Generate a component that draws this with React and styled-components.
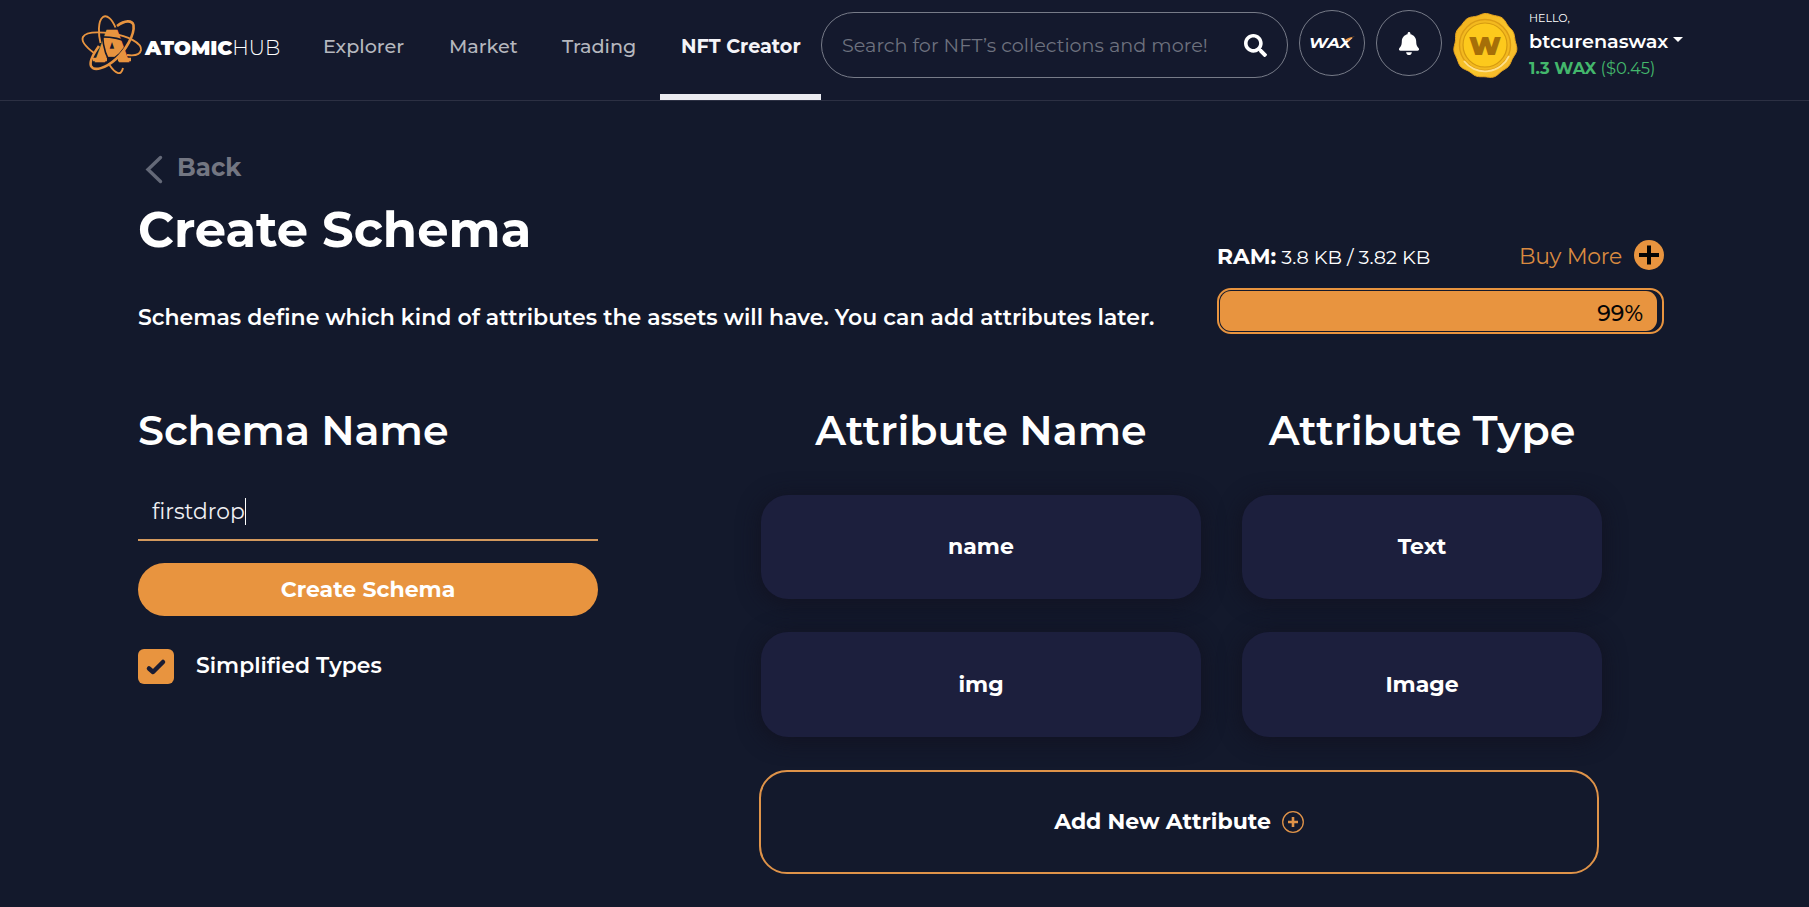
import React from "react";
import styled, { createGlobalStyle } from "styled-components";
import { FaSearch, FaBell } from "react-icons/fa";

const orange = "#e8943f";

const Global = createGlobalStyle`
  * { box-sizing: border-box; }
  body {
    margin: 0;
    min-height: 907px;
    background: #13192c;
    color: #fff;
    font-family: Montserrat, Inter, "Liberation Sans", sans-serif;
    overflow: hidden;
  }
`;

const Header = styled.header`
  display: flex;
  align-items: flex-start;
  height: 101px;
  padding-left: 82px;
  background: #14192d;
  border-bottom: 1px solid #2c3043;
`;

const Brand = styled.a`
  display: flex;
  width: 220px;
  padding-top: 15px;
`;

const Mark = styled.svg`
  flex: none;
  width: 60px;
  height: 60px;
  overflow: visible;
`;

const Wordmark = styled.div`
  display: flex;
  height: 65px;
  margin-left: 3px;
  align-items: center;
  font-size: 20.3px;
  font-weight: 300;

  strong {
    font-weight: 900;
  }
`;

const Nav = styled.nav`
  display: flex;
`;

const NavItem = styled.a`
  display: flex;
  align-items: center;
  height: 100px;
  width: ${(p) => p.$width}px;
  padding: 0 0 8px 21px;
  font-size: 19.2px;
  font-weight: ${(p) => (p.$active ? 700 : 500)};
  white-space: nowrap;
  color: ${(p) => (p.$active ? "#f4f4f8" : "#b5b7be")};
  box-shadow: ${(p) => (p.$active ? "inset 0 -6px #ebebf1" : "none")};
`;

const Search = styled.div`
  display: flex;
  align-items: center;
  justify-content: space-between;
  width: 467px;
  height: 66px;
  margin-top: 12px;
  padding: 0 20px;
  border: 1px solid #777b88;
  border-radius: 33px;
  font-size: 19.2px;
  font-weight: 400;
  color: #6d717e;
  white-space: nowrap;

  svg { width: 23px; height: 23px; color: #fff; }
`;

const RoundButton = styled.div`
  display: flex;
  align-items: center;
  justify-content: center;
  width: 66px;
  height: 66px;
  margin: 10px 0 0 11px;
  border: 1px solid #777b88;
  border-radius: 50%;
`;

const WaxLogo = styled.svg`
  width: 46px;
  height: 16px;
  overflow: visible;
`;

const BellIcon = styled(FaBell)`
  width: 24px;
  height: 23px;
`;

const Seal = styled.svg`
  width: 66px;
  height: 66px;
  margin: 12px 0 0 10px;
`;

const User = styled.div`
  display: flex;
  flex-direction: column;
  margin: 9px 0 0 11px;
`;

const Hello = styled.div`
  height: 18px;
  line-height: 18px;
  font-size: 11.1px;
`;

const UserName = styled.div`
  display: flex;
  align-items: center;
  height: 28px;
  font-size: 19.2px;
  font-weight: 600;
`;

const Caret = styled.i`
  margin: -3px 0 0 5px;
  border: 5.5px solid transparent;
  border-top-color: #fff;
  border-bottom: 0;
`;

const Balance = styled.div`
  height: 26px;
  line-height: 26px;
  font-size: 16.4px;
  color: #43b76c;

  strong { font-weight: 700; }
`;

const Main = styled.main`
  padding: 46px 145px 0 138px;
`;

const Back = styled.a`
  display: flex;
  align-items: center;
  gap: 14px;
  height: 40px;
  padding-left: 7px;
  font-size: 24.5px;
  font-weight: 700;
  color: #737682;

  svg { width: 18px; height: 29px; margin-top: 5px; }
`;

const Intro = styled.section`
  display: flex;
  justify-content: space-between;
`;

const Title = styled.h1`
  margin: 12px 0 44px;
  height: 60px;
  line-height: 60px;
  font-size: 49.6px;
  font-weight: 700;
`;

const Lead = styled.p`
  margin: 0;
  height: 30px;
  line-height: 30px;
  font-size: 22px;
  font-weight: 600;
  white-space: nowrap;
`;

const Ram = styled.aside`
  width: 447px;
  padding-top: 47px;
`;

const RamRow = styled.div`
  display: flex;
  align-items: center;
  height: 44px;
`;

const RamText = styled.div`
  flex: 1;
  font-size: 19.3px;

  strong { font-size: 21.8px; font-weight: 700; }
`;

const BuyMore = styled.a`
  display: flex;
  align-items: center;
  gap: 12px;
  font-size: 21.9px;
  font-weight: 400;
  letter-spacing: -0.25px;
  color: #d98a40;

  svg { width: 30px; height: 30px; margin-top: -2px; }
`;

const Meter = styled.div`
  height: 46px;
  margin-top: 10px;
  padding: 1px 5px 1px 1px;
  border: 2px solid ${orange};
  border-radius: 14px;
`;

const MeterFill = styled.div`
  display: flex;
  align-items: center;
  justify-content: flex-end;
  height: 100%;
  padding: 5px 14px 0 0;
  border-radius: 11px;
  background: ${orange};
  color: #050505;
  font-size: 22px;
  font-weight: 500;
`;

const Columns = styled.section`
  display: flex;
  margin-top: 67px;
`;

const Heading = styled.h2`
  margin: 0;
  height: 61px;
  line-height: 58px;
  font-size: 41.2px;
  font-weight: 600;
  text-align: ${(p) => (p.$center ? "center" : "left")};
  white-space: nowrap;
`;

const Form = styled.div`
  width: 460px;
  margin-right: 163px;
`;

const Field = styled.div`
  display: flex;
  align-items: center;
  height: 58px;
  margin-top: 21px;
  padding-left: 14px;
  border-bottom: 2px solid #d3995d;
  font-size: 21.8px;
  color: #f0f0f4;

  &::after {
    content: "";
    width: 1px;
    height: 27px;
    background: #fff;
  }
`;

const Submit = styled.button`
  display: block;
  width: 100%;
  height: 53px;
  margin: 22px 0 33px;
  padding: 0;
  border: 0;
  border-radius: 27px;
  background: ${orange};
  color: #fff;
  font: 700 22px Montserrat, Inter, sans-serif;
`;

const CheckRow = styled.label`
  display: flex;
  align-items: center;
  height: 35px;
  gap: 22px;
  font-size: 21.9px;
  font-weight: 600;
  line-height: 32px;
`;

const CheckLabel = styled.span`
  margin-top: -3px;
`;

const Checkbox = styled.span`
  display: flex;
  align-items: center;
  justify-content: center;
  width: 36px;
  height: 35px;
  border-radius: 6px;
  background: ${orange};

  svg { width: 20px; height: 18px; overflow: visible; }
`;

const Attributes = styled.div`
  width: 841px;
`;

const Grid = styled.div`
  display: grid;
  grid-template-columns: 440px 360px;
  grid-template-rows: 61px 104px 105px;
  column-gap: 41px;
  row-gap: 33px;
`;

const Card = styled.div`
  display: flex;
  align-items: center;
  justify-content: center;
  padding-bottom: 1px;
  border-radius: 27px;
  background: #1c1f3d;
  box-shadow: 0 3px 20px 3px rgba(17, 18, 32, 0.75);
  font-size: 22px;
  font-weight: 700;
`;

const AddButton = styled.div`
  display: flex;
  align-items: center;
  justify-content: center;
  gap: 11px;
  width: 840px;
  height: 104px;
  margin: 33px 0 0 -2px;
  padding-bottom: 1px;
  border: 2px solid #df9349;
  border-radius: 28px;
  font-size: 22px;
  font-weight: 700;

  svg { width: 22px; height: 22px; }
`;

function AtomLogo() {
  return (
    <Mark viewBox="0 0 60 60" fill="none" stroke={orange} strokeWidth="1.9">
      <text x="29.8" y="45.500" textAnchor="middle" fontFamily="DejaVu Sans" fontWeight="700" fontSize="41" fill={orange} strokeWidth="2.4">A</text>
      <path d="M11 44.500 H25 M36 44.500 H49" strokeWidth="3.500" />
      <g stroke="#14192d" strokeWidth="1.6">
        <path d="M49 18 C46 29 40 38 32 43.500" />
        <path d="M16 22 C28 21.500 38 23 47 28" />
        <path d="M20.500 20 C21 32 25 44 31 52" />
      </g>
      <path d="M33.500 12.500 C30 4 25 -0.500 21 2 C15.500 6 16.500 20 18.500 28 M27.500 50 C33 58 39 62 41 53" />
      <path strokeWidth="2.6" d="M35 11 C43 5 50 5 51.500 10 C53 20 43 36 34 44 C24 53 12 57 9 51 C7 46 12 38 17 31" />
      <path d="M12 38 C4 32 -1 26 1 22 C4 16 19 17 30 18.500 C46 21 60 28 59 35 C58 40 52 41 45 40" />
    </Mark>
  );
}

const sealEdge = Array.from({ length: 120 }, (_, i) => {
  const a = (i / 120) * Math.PI * 2;
  const r = 31 + Math.sin(a * 11) * 0.6 + Math.sin(a * 5 + 1) * 0.5;
  return `${(33 + Math.cos(a) * r).toFixed(2)},${(33.5 + Math.sin(a) * r * 1.02).toFixed(2)}`;
}).join(" ");

function WaxSeal() {
  return (
    <Seal viewBox="0 0 66 66">
      <defs>
        <linearGradient id="gold" x1="0" y1="0" x2="1" y2="1">
          <stop offset="0" stopColor="#f0ae1c" />
          <stop offset="0.6" stopColor="#f9c62b" />
          <stop offset="1" stopColor="#f5b32a" />
        </linearGradient>
      </defs>
      <polygon points={sealEdge} fill="url(#gold)" stroke="#eaa620" />
      <circle cx="33" cy="33" r="25.500" fill="#f3b91f" stroke="#dc9d14" strokeWidth="1.4" />
      <path d="M12 49 A26.500 26.500 0 0 0 57 44" fill="none" stroke="#ffe08a" strokeWidth="1.8" />
      <circle cx="33" cy="33" r="22" fill="#fdc91c" stroke="#d59a10" strokeWidth="1.2" />
      <text x="33" y="43" textAnchor="middle" textLength="32" lengthAdjust="spacingAndGlyphs" fontFamily="Montserrat" fontWeight="900" fontSize="24" fill="#a66f08">W</text>
    </Seal>
  );
}

const attributes = [
  { name: "name", type: "Text" },
  { name: "img", type: "Image" },
];

export default function App() {
  return (
    <>
      <Global />
      <Header>
        <Brand>
          <AtomLogo />
          <Wordmark><strong>ATOMIC</strong>HUB</Wordmark>
        </Brand>
        <Nav>
          <NavItem $width={126}>Explorer</NavItem>
          <NavItem $width={113}>Market</NavItem>
          <NavItem $width={119}>Trading</NavItem>
          <NavItem $width={161} $active>NFT Creator</NavItem>
        </Nav>
        <Search>Search for NFT’s collections and more!<FaSearch /></Search>
        <RoundButton>
          <WaxLogo viewBox="0 0 46 16">
            <text x="0" y="13" textLength="42" lengthAdjust="spacingAndGlyphs" fontFamily="Montserrat" fontStyle="italic" fontWeight="700" fontSize="15" fill="#fff">WAX</text>
            <path d="M36 5 Q39 2 46 1.500 Q41 3 39.500 6 Z" fill={orange} />
          </WaxLogo>
        </RoundButton>
        <RoundButton><BellIcon /></RoundButton>
        <WaxSeal />
        <User>
          <Hello>HELLO,</Hello>
          <UserName>btcurenaswax<Caret /></UserName>
          <Balance><strong>1.3 WAX</strong> ($0.45)</Balance>
        </User>
      </Header>
      <Main>
        <Back>
          <svg viewBox="0 0 18 29" fill="none" stroke="#646978" strokeWidth="3.400" strokeLinecap="round">
            <path d="M15.500 2.500 L3 14.500 L15.500 26.500" />
          </svg>
          Back
        </Back>
        <Intro>
          <div>
            <Title>Create Schema</Title>
            <Lead>Schemas define which kind of attributes the assets will have. You can add attributes later.</Lead>
          </div>
          <Ram>
            <RamRow>
              <RamText><strong>RAM:</strong> 3.8 KB / 3.82 KB</RamText>
              <BuyMore>
                Buy More
                <svg viewBox="0 0 30 30">
                  <circle cx="15" cy="15" r="15" fill={orange} />
                  <path d="M5 15 H25 M15 5.500 V24.500" stroke="#050505" strokeWidth="4" />
                </svg>
              </BuyMore>
            </RamRow>
            <Meter><MeterFill>99%</MeterFill></Meter>
          </Ram>
        </Intro>
        <Columns>
          <Form>
            <Heading>Schema Name</Heading>
            <Field>firstdrop</Field>
            <Submit>Create Schema</Submit>
            <CheckRow>
              <Checkbox>
                <svg viewBox="0 0 20 18" fill="none" stroke="#1a1c33" strokeWidth="4.500" strokeLinecap="round" strokeLinejoin="round">
                  <path d="M3 10.500 L7 14 L17 4" />
                </svg>
              </Checkbox>
              <CheckLabel>Simplified Types</CheckLabel>
            </CheckRow>
          </Form>
          <Attributes>
            <Grid>
              <Heading $center>Attribute Name</Heading>
              <Heading $center>Attribute Type</Heading>
              {attributes.map((a) => (
                <React.Fragment key={a.name}>
                  <Card>{a.name}</Card>
                  <Card>{a.type}</Card>
                </React.Fragment>
              ))}
            </Grid>
            <AddButton>
              Add New Attribute
              <svg viewBox="0 0 22 22" fill="none" stroke="#df9349">
                <circle cx="11" cy="11" r="10.300" strokeWidth="1.300" />
                <path d="M6 11 H16 M11 6 V16" strokeWidth="2.600" />
              </svg>
            </AddButton>
          </Attributes>
        </Columns>
      </Main>
    </>
  );
}
